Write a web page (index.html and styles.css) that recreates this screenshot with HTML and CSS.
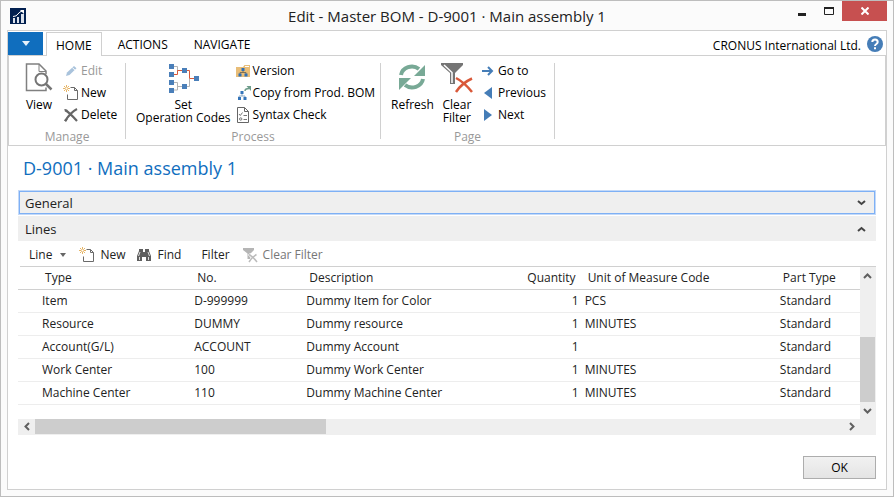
FILE: index.html
```
<!DOCTYPE html>
<html lang="en">
<head>
<meta charset="utf-8">
<title>Edit - Master BOM</title>
<link rel="stylesheet" href="styles.css">
</head>
<body>
<svg class="defs" aria-hidden="true">
  <symbol id="i-new" viewBox="0 0 16 16">
    <path d="M7.5 2.5h4l3 3v9h-10v-5" fill="none" stroke="#6a6a6a"/>
    <path d="M11.5 2.5v3h3" fill="none" stroke="#6a6a6a"/>
    <path d="M3.500 0v7M0 3.500h7M1 1l5 5M6 1l-5 5" stroke="#e6b566"/>
    <rect x="2.500" y="2.500" width="2" height="2" fill="#fff"/>
  </symbol>
</svg>
<div class="window">
  <header class="titlebar">
    <svg class="logo" width="16" height="16" viewBox="0 0 16 16"><rect width="16" height="16" fill="#022050"/><path d="M3 10h2v5H3zM7 9h2v6H7zM11 6h3v9h-3z" fill="#dce2ec"/><path d="M3 8.500q3.500 0 5-2.500t4.500-3" fill="none" stroke="#fff"/><path d="M10 2h4v4z" fill="#fff"/></svg>
    <h1>Edit - Master BOM - D-9001 · Main assembly 1</h1>
    <div class="winctl">
      <button aria-label="Minimize"><svg width="10" height="10"><path d="M1 8.500h8" stroke="#222" stroke-width="3"/></svg></button>
      <button aria-label="Maximize"><svg width="10" height="10"><path d="M.5 1v7.500h9V1" fill="none" stroke="#222"/><path d="M0 2h10" stroke="#222" stroke-width="2"/></svg></button>
      <button class="close" aria-label="Close"><svg width="8" height="8"><path d="M.5.5l7 7M7.500.5l-7 7" stroke="#fff" stroke-width="2"/></svg></button>
    </div>
  </header>
  <div class="panel">
    <nav class="tabs">
      <button class="file" aria-label="Application menu"><svg width="8" height="5"><path d="M0 0h8L4 5z" fill="#e6f1fb"/></svg></button>
      <button class="tab active">HOME</button>
      <button class="tab">ACTIONS</button>
      <button class="tab">NAVIGATE</button>
      <span class="company">CRONUS International Ltd.</span>
      <button class="help" aria-label="Help"><svg width="16" height="16" viewBox="0 0 16 16"><circle cx="8" cy="8" r="8" fill="#457db7"/><path d="M5.300 6q0-2.500 2.700-2.500T10.700 6q0 1.200-1.300 2T8 10" fill="none" stroke="#fff" stroke-width="2"/><path d="M7 11.300h2v2H7z" fill="#fff"/></svg></button>
    </nav>
    <section class="ribbon" aria-label="Ribbon">
      <div class="group g-manage">
        <div class="items">
          <button class="big"><svg width="28" height="28" viewBox="0 0 28 28" preserveAspectRatio="xMidYMin meet"><path d="M21 11V8l-7-7H1.500v26.500h19.500v-3" fill="none" stroke="#808080" stroke-width="1.500"/><path d="M14 1v7.500h7" fill="none" stroke="#808080"/><circle cx="16.500" cy="16.500" r="6" fill="#fff" stroke="#757575" stroke-width="2"/><path d="M21 21l5.500 5.500" stroke="#757575" stroke-width="2.500"/></svg><span>View</span></button>
          <div class="stack">
            <button class="small" disabled><svg width="16" height="16" viewBox="0 0 16 16"><path d="M3 13l1-3.500L11 3l2.500 2.300L6.500 12z" fill="#a9c3dc"/><path d="M9.300 4.500l2.500 2.500" stroke="#fff"/></svg>Edit</button>
            <button class="small"><svg width="16" height="16"><use href="#i-new"/></svg>New</button>
            <button class="small"><svg width="16" height="16" viewBox="0 0 16 16"><path d="M2 3q5 3 12 11M14 2Q8 5 2 14" fill="none" stroke="#666" stroke-width="2.200"/><path d="M1 2l4 1-2 2zM1 13l2 2 2-3z" fill="#666"/></svg>Delete</button>
          </div>
        </div>
        <div class="caption">Manage</div>
      </div>
      <div class="group g-process">
        <div class="items">
          <button class="big"><svg width="31" height="30" viewBox="0 0 31 30" preserveAspectRatio="xMidYMin meet"><path d="M5 3.500h4.500V8M5 19.500h4.500V27H5M10 23.500h7" fill="none" stroke="#b4b4b4"/><path d="M17 23.500h4.500V16" fill="none" stroke="#b4b4b4"/><path d="M5 11.500h4.500V7.500h12v8H26" fill="none" stroke="#d9593a"/><path d="M1 1h5v5H1zM1 9h5v5H1zM1 17h5v5H1zM1 25h5v5H1zM14 5h5v5h-5zM14 21h5v5h-5zM26 13h5v5h-5z" fill="#4a7fb9"/></svg><span>Set<br>Operation Codes</span></button>
          <div class="stack">
            <button class="small"><svg width="16" height="16" viewBox="0 0 16 16"><path d="M1 4h7l1.500-2H15v12H1z" fill="#e8bd78"/><path d="M10 3h4v1h-4z" fill="#fff"/><path d="M8 7v3M5 11V9.500h6V11" fill="none" stroke="#7e7055"/><path d="M6.500 5h3v3h-3zM3.500 10.500h3v3h-3zM9.500 10.500h3v3h-3z" fill="#2f70b7"/></svg>Version</button>
            <button class="small"><svg width="16" height="16" viewBox="0 0 16 16"><path d="M7 8v3M4 13v-2h6v2" fill="none" stroke="#8daac6"/><path d="M5.500 6h3v3h-3zM3 12h3v3H3zM8.500 12h3v3h-3z" fill="#3475ba"/><path d="M10 6q0-2.500 4-2.500" fill="none" stroke="#6e9d8b" stroke-width="1.500"/><path d="M11.500 1H16v5z" fill="#6e9d8b"/></svg>Copy from Prod. BOM</button>
            <button class="small"><svg width="16" height="16" viewBox="0 0 16 16"><path d="M2.500.5h7l4 4v11h-11zM9.500.5v4h4" fill="none" stroke="#666"/><path d="M4 7l1.300 1.500L7.500 5.500M8.500 8.500H12M8.500 12.500H12" fill="none" stroke="#777"/><circle cx="5.700" cy="12" r="1.200" fill="none" stroke="#777"/></svg>Syntax Check</button>
          </div>
        </div>
        <div class="caption">Process</div>
      </div>
      <div class="group g-page">
        <div class="items">
          <button class="big"><svg width="28" height="28" viewBox="0 0 28 28" preserveAspectRatio="xMidYMin meet"><path d="M3 12A11 10 0 0 1 21 6" fill="none" stroke="#78a996" stroke-width="4"/><path d="M27 2v11H16z" fill="#78a996"/><path d="M25 16A11 10 0 0 1 7 22" fill="none" stroke="#78a996" stroke-width="4"/><path d="M1 27V15h12z" fill="#78a996"/></svg><span>Refresh</span></button>
          <button class="big"><svg width="32" height="32" viewBox="0 0 32 32"><path d="M0 0h22v2l-8 8v11H9V10L0 2z" fill="#757575"/><path d="M3 2l8 7.500V20" fill="none" stroke="#fff" stroke-width="1.500"/><path d="M15 15q8 4 16 14M31 15.500Q21 20 15 29" fill="none" stroke="#d9593a" stroke-width="2.500"/></svg><span>Clear<br>Filter</span></button>
          <div class="stack">
            <button class="small"><svg width="16" height="16" viewBox="0 0 16 16"><path d="M2 8h10M8 4l4 4-4 4" fill="none" stroke="#457db7" stroke-width="2"/></svg>Go to</button>
            <button class="small"><svg width="16" height="16" viewBox="0 0 16 16"><path d="M12 2v12L4 8z" fill="#457db7"/></svg>Previous</button>
            <button class="small"><svg width="16" height="16" viewBox="0 0 16 16"><path d="M4 2v12l8-6z" fill="#457db7"/></svg>Next</button>
          </div>
        </div>
        <div class="caption">Page</div>
      </div>
    </section>
    <main>
      <h2>D-9001 · Main assembly 1</h2>
      <button class="fasttab focused" aria-expanded="false">General<svg width="9" height="6"><path d="M1 1l3.500 3L8 1" fill="none" stroke="#444" stroke-width="2"/></svg></button>
      <button class="fasttab" aria-expanded="true">Lines<svg width="9" height="6"><path d="M1 5l3.500-3L8 5" fill="none" stroke="#444" stroke-width="2"/></svg></button>
      <div class="toolbar">
        <button class="t-line">Line<svg width="6" height="4"><path d="M0 0h6L3 4z" fill="#666"/></svg></button>
        <button class="t-new"><svg width="16" height="16"><use href="#i-new"/></svg>New</button>
        <button class="t-find"><svg width="16" height="16" viewBox="0 0 16 16"><path d="M3 4V2h4v3h2V2h4v2l2 5v5h-5v-4H6v4H1V9z" fill="#5f5f5f"/><path d="M4 5L2.500 9M12 5l1.500 4M3.500 10v3M12.500 10v3" stroke="#fff" stroke-width=".8"/></svg>Find</button>
        <button class="t-filter">Filter</button>
        <button class="t-clear" disabled><svg width="16" height="16" viewBox="0 0 16 16"><path d="M1 1h11v2L8.500 6.500V12H5.500V6.500L1 3z" fill="#b5b5b5"/><path d="M7 7l8 8M15 7l-8 8" stroke="#fff" stroke-width="3"/><path d="M7 7.500q4 2 8 7.500M14.500 7.500Q10 10 7 15" fill="none" stroke="#bbb" stroke-width="1.500"/></svg>Clear Filter</button>
      </div>
      <div class="grid">
        <div class="rows">
          <table>
            <colgroup><col class="c-mark"><col class="c-type"><col class="c-no"><col class="c-desc"><col class="c-qty"><col class="c-uom"><col class="c-part"></colgroup>
            <thead><tr><th></th><th>Type</th><th>No.</th><th>Description</th><th class="num">Quantity</th><th>Unit of Measure Code</th><th>Part Type</th></tr></thead>
            <tbody>
              <tr><td></td><td>Item</td><td>D-999999</td><td>Dummy Item for Color</td><td class="num">1</td><td>PCS</td><td>Standard</td></tr>
              <tr><td></td><td>Resource</td><td>DUMMY</td><td>Dummy resource</td><td class="num">1</td><td>MINUTES</td><td>Standard</td></tr>
              <tr><td></td><td>Account(G/L)</td><td>ACCOUNT</td><td>Dummy Account</td><td class="num">1</td><td></td><td>Standard</td></tr>
              <tr><td></td><td>Work Center</td><td>100</td><td>Dummy Work Center</td><td class="num">1</td><td>MINUTES</td><td>Standard</td></tr>
              <tr><td></td><td>Machine Center</td><td>110</td><td>Dummy Machine Center</td><td class="num">1</td><td>MINUTES</td><td>Standard</td></tr>
            </tbody>
          </table>
        </div>
        <div class="vscroll">
          <button aria-label="Scroll up"><svg width="9" height="6"><path d="M1 5l3.500-3.500L8 5" fill="none" stroke="#606060" stroke-width="2"/></svg></button>
          <div class="track"><div class="thumb"></div></div>
          <button aria-label="Scroll down"><svg width="9" height="6"><path d="M1 1l3.500 3.500L8 1" fill="none" stroke="#606060" stroke-width="2"/></svg></button>
        </div>
      </div>
      <div class="hscroll">
        <button aria-label="Scroll left"><svg width="6" height="9"><path d="M5 1L1.500 4.500 5 8" fill="none" stroke="#606060" stroke-width="2"/></svg></button>
        <div class="track"><div class="thumb"></div></div>
        <button aria-label="Scroll right"><svg width="6" height="9"><path d="M1 1l3.500 3.500L1 8" fill="none" stroke="#606060" stroke-width="2"/></svg></button>
      </div>
      <footer><button class="ok">OK</button></footer>
    </main>
  </div>
</div>
</body>
</html>
```

FILE: styles.css
```
* { box-sizing: border-box; }
body {
  margin: 0;
  font: 12px/16px "Open Sans", "Noto Sans", sans-serif;
  color: #222;
}
button {
  border: 0;
  padding: 0;
  background: none;
  font: inherit;
  color: inherit;
  white-space: nowrap;
}
svg { display: block; flex: none; }
.defs { position: absolute; width: 0; height: 0; }
h1, h2 { margin: 0; font-weight: 400; }

.window {
  display: flex;
  flex-direction: column;
  min-height: 100vh;
  padding: 0 6px 6px;
  border: 1px solid #bdbdbd;
  background: #fbfbfb;
}
.titlebar {
  display: grid;
  grid-template-columns: 1fr auto 1fr;
  align-items: center;
  height: 29px;
}
.logo { margin-left: 3px; }
.titlebar h1 { font-size: 15px; line-height: 28px; }
.winctl { display: flex; justify-content: flex-end; align-self: start; }
.winctl button {
  display: grid;
  place-items: center;
  width: 27px;
  height: 20px;
}
.winctl .close { width: 45px; background: #c75050; }

.panel {
  display: flex;
  flex-direction: column;
  flex: 1;
  border: 1px solid #d0d0d0;
  background: #fff;
}
.tabs {
  display: flex;
  align-items: flex-end;
  height: 24px;
  color: #000;
}
.file {
  display: grid;
  place-items: center;
  width: 35px;
  height: 23px;
  background: #106ebe;
}
.tab { height: 23px; padding: 3px 10px 0; }
.tab.active {
  z-index: 1;
  margin: 0 6px -1px 3px;
  padding: 2px 9px 0;
  height: 24px;
  border: 1px solid #d0d0d0;
  border-bottom: 0;
  background: #fff;
}
.tab + .tab + .tab { margin-left: 6px; }
.company { margin-left: auto; padding-bottom: 1px; }
.help { margin: 0 3px 3px 6px; }

.ribbon {
  display: flex;
  height: 91px;
  padding: 7px 0 6px;
  border: 1px solid #d0d0d0;
  color: #000;
}
.group {
  display: flex;
  flex-direction: column;
  justify-content: space-between;
  border-right: 1px solid #d0d0d0;
}
.items { display: flex; }
.big {
  display: flex;
  flex-direction: column;
  align-items: center;
  line-height: 13px;
}
.big svg { height: 32px; margin-bottom: 3px; }
.stack { display: flex; flex-direction: column; }
.small {
  display: flex;
  align-items: center;
  gap: 2px;
  height: 22px;
  padding-bottom: 7px;
}
.small:disabled { color: #999; }
.caption { margin-bottom: -3px; text-align: center; color: #999; }
.g-manage { width: 117px; }
.g-manage .items { padding-left: 16px; gap: 10px; }
.g-process { width: 255px; }
.g-process .items { padding-left: 10px; gap: 4px; }
.g-page { width: 174px; }
.g-page .items { padding-left: 10px; gap: 7px; }

main { display: flex; flex-direction: column; flex: 1; padding: 0 10px 10px; }
h2 { margin: 9px 5px; font-size: 18px; line-height: 26px; color: #106ebe; }
.fasttab {
  display: flex;
  justify-content: space-between;
  align-items: center;
  height: 25px;
  margin-bottom: 1px;
  padding: 0 10px 0 7px;
  background: #efefef;
  font-size: 13px;
}
.fasttab.focused {
  padding: 0 9px 0 6px;
  border: 1px solid #c3d9f8;
  box-shadow: inset 0 0 0 1px #7eb0f5;
}
.toolbar {
  display: flex;
  align-items: center;
  height: 25px;
  margin-left: 2px;
  padding: 2px 0 0 9px;
  border-bottom: 1px solid #d0d0d0;
}
.toolbar button { display: flex; align-items: center; gap: 5px; }
.toolbar .t-line { gap: 8px; margin-right: 13px; }
.t-new, .t-find { margin-right: 11px; }
.toolbar .t-filter { margin: 0 12px 0 9px; }
.t-clear:disabled { color: #777; }

.grid { display: flex; height: 152px; }
.rows { flex: 1; min-width: 0; overflow: hidden; }
table { width: 100%; table-layout: fixed; border-collapse: separate; border-spacing: 0; }
.c-mark { width: 21px; }
.c-type { width: 152px; }
.c-no { width: 112px; }
.c-desc { width: 207px; }
.c-qty { width: 71px; }
.c-uom { width: 195px; }
.c-part { width: 83px; }
th, td {
  height: 23px;
  padding: 0 3px;
  border-bottom: 1px solid #ededed;
  text-align: left;
  font-weight: 400;
  white-space: nowrap;
}
th { padding: 0 6px; border-color: #d0d0d0; }
.num { text-align: right; }

.vscroll, .hscroll { display: flex; background: #efefef; }
.vscroll { flex-direction: column; width: 16px; padding-right: 1px; }
.hscroll { height: 16px; padding-bottom: 1px; }
.vscroll button, .hscroll button { display: grid; place-items: center; flex: none; width: 17px; height: 17px; }
.vscroll button { width: 15px; }
.hscroll button { height: 15px; }
.hscroll button:last-child { margin-right: 16px; }
.track { display: flex; flex: 1; }
.vscroll .track { align-items: flex-end; }
.thumb { background: #cdcdcd; }
.vscroll .thumb { width: 100%; height: 55%; }
.hscroll .thumb { width: 36%; }

footer { display: flex; justify-content: flex-end; margin-top: auto; }
.ok {
  width: 73px;
  height: 23px;
  border: 1px solid #adadad;
  background: linear-gradient(#f1f1f1, #e4e4e4);
  color: #000;
}
```
